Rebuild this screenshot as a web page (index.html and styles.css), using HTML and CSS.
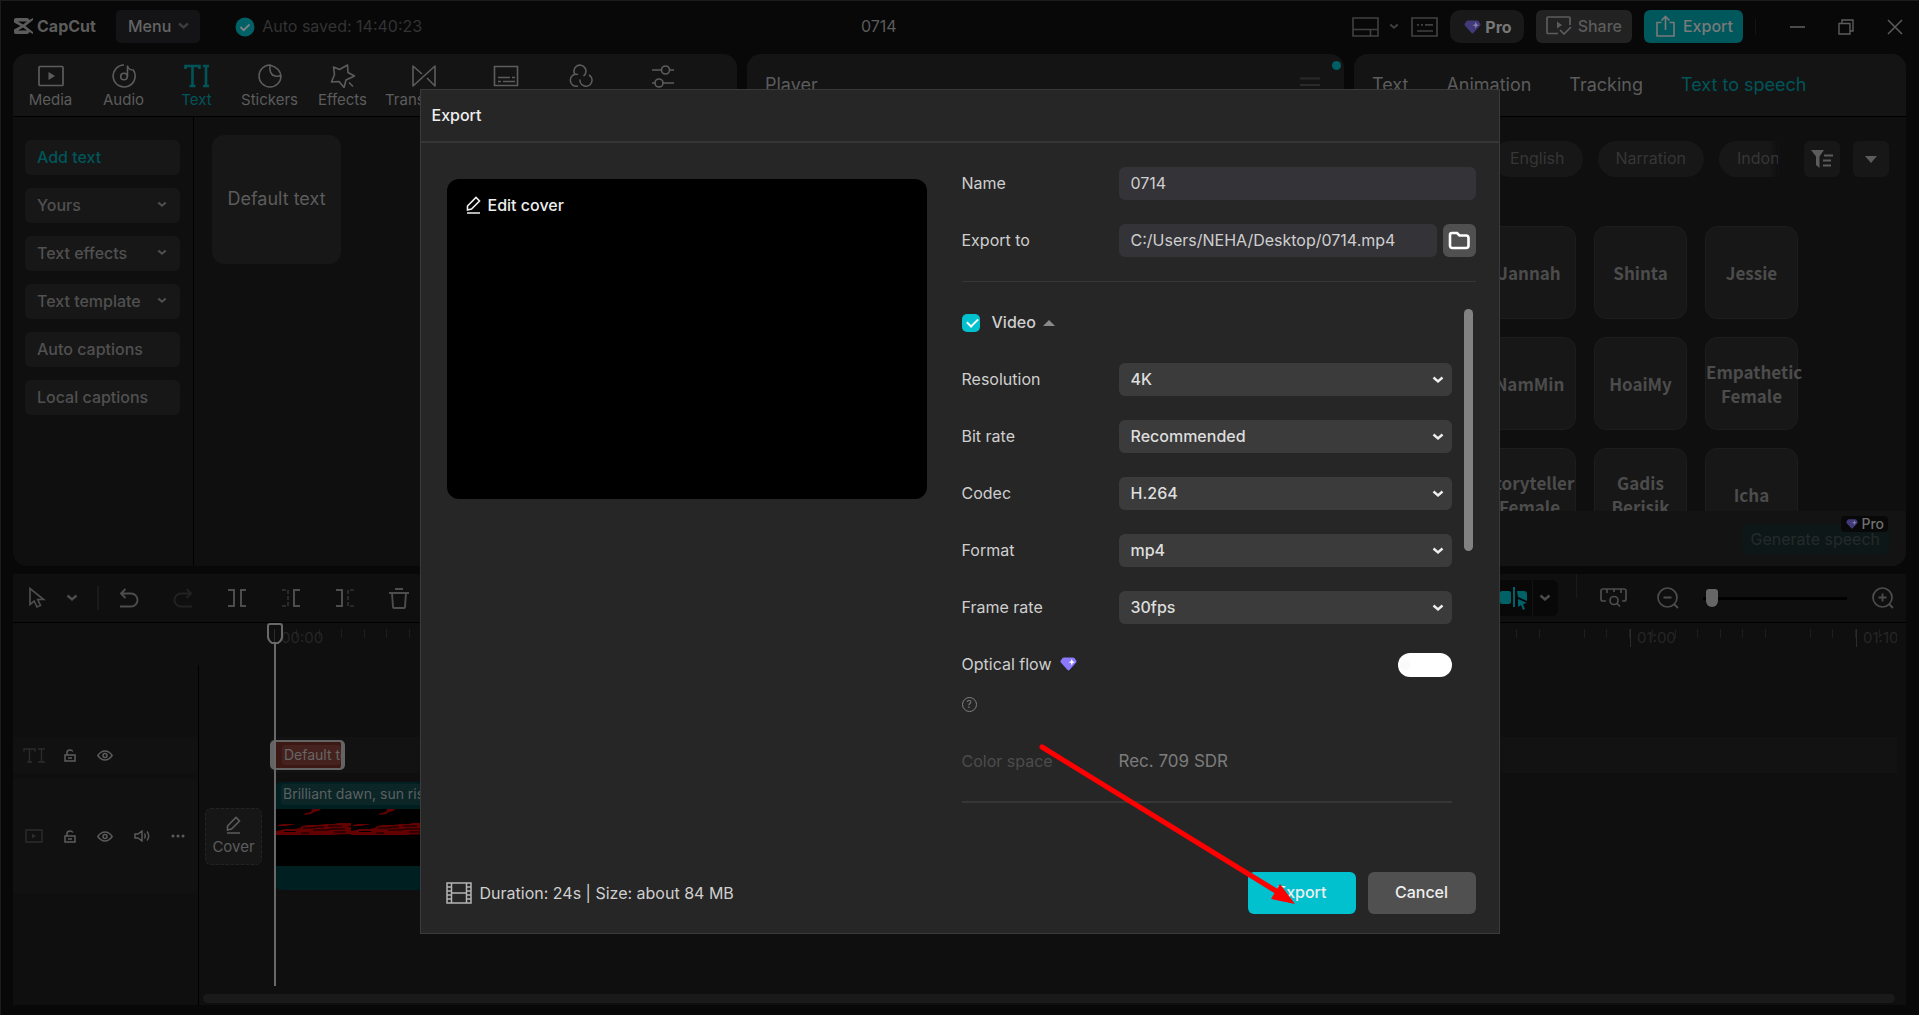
FILE: index.html
```html
<!DOCTYPE html>
<html lang="en">
<head>
    <meta charset="UTF-8">
    <meta name="viewport" content="width=device-width, initial-scale=1.0">
    <title>CapCut</title>
    <link rel="stylesheet" href="styles.css">
</head>
<body>
    <!-- shared icons -->
    <svg class="sprite" aria-hidden="true">
        <symbol id="chevron" viewBox="0 0 12 8"><path d="M1.5 1.5 6 5.5l4.5-4" fill="none" stroke="currentColor" stroke-width="2.4"/></symbol>
        <symbol id="gem" viewBox="0 0 18 15"><path d="M4 .5h10q1 0 1.600.8l1.800 2.700q.6 1-.2 1.900L10 14q-1 1-2 0L.8 5.900Q0 5 .6 4l1.800-2.700Q3 .5 4 .5z" fill="currentColor"/><path class="gem-star" d="M12.500 2l1 2.500 2.500 1-2.500 1-1 2.500-1-2.500-2.500-1 2.500-1z"/></symbol>
        <symbol id="pen" viewBox="0 0 16 18"><path d="M1.500 14v-4L10 1.500l3.500 3.500L5.500 13z M1 17h13" fill="none" stroke="currentColor" stroke-width="1.600"/></symbol>
        <symbol id="lock" viewBox="0 0 12 13"><path d="M1 6h10v6H1zM3 6V3.500q0-2.500 3-2.500 2 0 2.800 1.500M4 9h4" fill="none" stroke="currentColor" stroke-width="1.500"/></symbol>
        <symbol id="eye" viewBox="0 0 16 11"><path d="M.8 5.500Q4 1 8 1t7.200 4.500Q12 10 8 10T.8 5.500z" fill="none" stroke="currentColor" stroke-width="1.400"/><circle cx="8" cy="5.500" r="2" fill="none" stroke="currentColor" stroke-width="1.500"/></symbol>
    </svg>

    <header class="topbar">
        <div class="logo">
            <svg width="19" height="16" viewBox="0 0 19 16"><path d="M0 1.500Q0 0 2 0h11q2 0 2.200 2L19 0v2L11.500 8 19 14v2l-3.800-2q-.2 2-2.200 2H2q-2 0-2-1.500v-3L6.500 8 0 4.500zM4 3.500 9 6.500l4-3zM4 12.500h9l-4-3z" fill="currentColor" fill-rule="evenodd"/></svg>
            <span>CapCut</span>
        </div>
        <button class="menu-button">Menu <svg width="13" height="8"><use href="#chevron"/></svg></button>
        <div class="saved">
            <svg width="20" height="20" viewBox="0 0 20 20"><circle cx="10" cy="10" r="9.500" fill="#006167"/><path d="M5.500 10l3.200 3.200L14.500 7.500" fill="none" stroke="#808080" stroke-width="1.800"/></svg>
            <span>Auto saved: 14:40:23</span>
        </div>
        <div class="project-name">0714</div>
        <div class="top-actions">
            <button class="icon-button" aria-label="Layout">
                <svg width="27" height="20" viewBox="0 0 27 20"><path d="M1 1h25v18H1zM1 12.500h25M18.500 12.500V19" fill="none" stroke="currentColor" stroke-width="1.600"/></svg>
                <svg class="layout-chevron" width="10" height="7"><use href="#chevron"/></svg>
            </button>
            <button class="icon-button" aria-label="Shortcuts">
                <svg width="27" height="20" viewBox="0 0 27 20"><path d="M1 1h25v18H1zM6 7.800h2m2 0h2m2 0h8M6 14h16" fill="none" stroke="currentColor" stroke-width="1.700"/></svg>
            </button>
            <button class="pro-button"><svg class="gem" width="17" height="14"><use href="#gem"/></svg>Pro</button>
            <button class="share-button">
                <svg width="26" height="19" viewBox="0 0 26 19"><path d="M12 17.500H2q-1 0-1-1V2q0-1 1-1h21q1 0 1 1v7M14 14l4 4 7-7" fill="none" stroke="currentColor" stroke-width="1.700"/><path d="M11 5.500v7l5-3.500z" fill="currentColor"/></svg>
                Share
            </button>
            <button class="export-button">
                <svg width="19" height="22" viewBox="0 0 19 22"><path d="M5.500 7.500H1V21h17V7.500h-4.500M9.500 15V1.500M5.500 5.500l4-4 4 4" fill="none" stroke="currentColor" stroke-width="1.600"/></svg>
                Export
            </button>
            <div class="window-buttons">
                <button class="icon-button" aria-label="Minimize"><svg width="15" height="16" viewBox="0 0 15 16"><path d="M0 8h15" stroke="currentColor" stroke-width="1.600"/></svg></button>
                <button class="icon-button" aria-label="Restore"><svg width="16" height="16" viewBox="0 0 16 16"><path d="M1 4.500h11V15H1zM4 4.500V1h11v11h-3" fill="none" stroke="currentColor" stroke-width="1.400"/></svg></button>
                <button class="icon-button" aria-label="Close"><svg width="16" height="16" viewBox="0 0 16 16"><path d="M1 1l14 14M15 1 1 15" stroke="currentColor" stroke-width="1.500"/></svg></button>
            </div>
        </div>
    </header>

    <main class="panels">
        <section class="panel">
            <nav class="panel-header tabs">
                <button class="tab"><svg width="26" height="24" viewBox="0 0 26 24"><rect x="1" y="2.500" width="24" height="19" rx="1" fill="none" stroke="currentColor" stroke-width="1.700"/><path d="M10.500 8v8l6.500-4z" fill="currentColor"/></svg>Media</button>
                <button class="tab"><svg width="26" height="24" viewBox="0 0 26 24"><path d="M13 1a11 11 0 1 0 9 4.500M16.500 12.500V1.500q.5 4 5 4.500" fill="none" stroke="currentColor" stroke-width="1.600"/><circle cx="13" cy="12.500" r="3.300" fill="none" stroke="currentColor" stroke-width="1.600"/></svg>Audio</button>
                <button class="tab active"><svg width="26" height="24" viewBox="0 0 26 24"><path d="M1.500 5V2h14v3M8.500 2v20M5.500 22h6M19 2h6M19 22h6M22 2v20" fill="none" stroke="currentColor" stroke-width="2.600"/></svg>Text</button>
                <button class="tab"><svg width="26" height="24" viewBox="0 0 26 24"><path d="M13 1a11 11 0 1 0 11 11Q23 4 13 1zM13 1q-1 10 5 11 4 1 6-1" fill="none" stroke="currentColor" stroke-width="1.500"/></svg>Stickers</button>
                <button class="tab"><svg width="26" height="24" viewBox="0 0 26 24"><path d="M17.500 1 9.500 5.500 3.500 3l1 7.500L1.500 18l7.500-.5 5 6 2-7.500 8.500-4-6.500-3.500zM19 18.500l4 4" fill="none" stroke="currentColor" stroke-width="1.600" stroke-linejoin="round"/></svg>Effects</button>
                <button class="tab"><svg width="26" height="24" viewBox="0 0 26 24"><path d="M11 10 2 2v20L24 2v20l-8-8" fill="none" stroke="currentColor" stroke-width="1.600" stroke-linejoin="round"/></svg>Transitions</button>
                <button class="tab"><svg width="26" height="24" viewBox="0 0 26 24"><path d="M1.500 2.500h23v19h-23zM5 13.500h12m2 0h3M5 17.500h3m2 0h12" fill="none" stroke="currentColor" stroke-width="1.600"/></svg>Captions</button>
                <button class="tab"><svg width="26" height="24" viewBox="0 0 26 24"><path d="M8 10.500a6 6 0 1 1 8.500 1.500M11 10.500A6 6 0 1 0 11 22M13 15.500a6 6 0 1 0 9-4.500" fill="none" stroke="currentColor" stroke-width="1.600"/></svg>Filters</button>
                <button class="tab"><svg width="26" height="24" viewBox="0 0 26 24"><path d="M2 6h9m8 0h5M2 19h3m8 0h11" fill="none" stroke="currentColor" stroke-width="1.600"/><circle cx="15.500" cy="6" r="4" fill="none" stroke="currentColor" stroke-width="1.600"/><circle cx="9" cy="19" r="4" fill="none" stroke="currentColor" stroke-width="1.600"/></svg>Adjustment</button>
            </nav>
            <div class="library">
                <div class="side-menu">
                    <button class="side-item active">Add text</button>
                    <button class="side-item">Yours <svg width="10" height="7"><use href="#chevron"/></svg></button>
                    <button class="side-item">Text effects <svg width="10" height="7"><use href="#chevron"/></svg></button>
                    <button class="side-item">Text template <svg width="10" height="7"><use href="#chevron"/></svg></button>
                    <button class="side-item">Auto captions</button>
                    <button class="side-item">Local captions</button>
                </div>
                <div class="library-items">
                    <button class="text-card">Default text</button>
                </div>
            </div>
        </section>

        <section class="panel">
            <div class="panel-header player-header">
                <span>Player</span>
                <svg width="20" height="16" viewBox="0 0 20 16"><path d="M0 1.500h20M0 8h20M0 14.500h20" stroke="#2a2a2a" stroke-width="2"/></svg>
                <i class="dot"></i>
            </div>
        </section>

        <section class="panel">
            <nav class="panel-header speech-tabs">
                <button>Text</button>
                <button>Animation</button>
                <button>Tracking</button>
                <button class="active">Text to speech</button>
            </nav>
            <div class="filters">
                <div class="chips">
                    <button class="chip">English</button>
                    <button class="chip">Narration</button>
                    <button class="chip cut">Indonesian</button>
                </div>
                <button class="square-button" aria-label="Filter"><svg width="22" height="18" viewBox="0 0 22 18"><path d="M0 0h13L8.500 6.500V18L5 15V6.500z" fill="currentColor"/><path d="M13 5.500h9M12 10.500h8M12 15.500h8" stroke="currentColor" stroke-width="2"/></svg></button>
                <button class="square-button" aria-label="More"><svg width="12" height="7" viewBox="0 0 12 7"><path d="M0 0h12L6 7z" fill="currentColor"/></svg></button>
            </div>
            <div class="voices">
                <button class="voice first">Jannah</button>
                <button class="voice">Shinta</button>
                <button class="voice">Jessie</button>
                <button class="voice first">NamMin</button>
                <button class="voice">HoaiMy</button>
                <button class="voice">Empathetic Female</button>
                <button class="voice first">Storyteller Female</button>
                <button class="voice">Gadis Berisik</button>
                <button class="voice">Icha</button>
            </div>
            <div class="speech-footer">
                <button class="generate" disabled>Generate speech</button>
                <span class="pro-badge"><svg class="gem" width="12" height="10"><use href="#gem"/></svg>Pro</span>
            </div>
        </section>
    </main>

    <section class="timeline">
        <div class="toolbar">
            <div class="tools">
                <button class="tool" aria-label="Select"><svg width="18" height="22" viewBox="0 0 18 22"><path d="M2 1.500v16l4.200-3.500 2.800 6 3.500-1.600-2.800-5.900h6z" fill="none" stroke="currentColor" stroke-width="1.700"/></svg></button>
                <button class="tool narrow" aria-label="Select mode"><svg width="12" height="8"><use href="#chevron"/></svg></button>
                <i class="tool-separator"></i>
                <button class="tool" aria-label="Undo"><svg width="20" height="20" viewBox="0 0 20 20"><path d="M6.500 1 2 5.500 6.500 10M2 5.500h10a6.300 6.300 0 0 1 0 13H1" fill="none" stroke="currentColor" stroke-width="1.900"/></svg></button>
                <button class="tool off" aria-label="Redo"><svg width="20" height="20" viewBox="0 0 20 20"><path d="M13.500 1 18 5.500 13.500 10M18 5.500H8a6.300 6.300 0 0 0 0 13h11" fill="none" stroke="currentColor" stroke-width="1.900"/></svg></button>
                <button class="tool" aria-label="Split"><svg width="18" height="18" viewBox="0 0 18 18"><path d="M0 1h6v16H0M18 1h-5v16h5" fill="none" stroke="currentColor" stroke-width="2"/></svg></button>
                <button class="tool" aria-label="Delete left"><svg width="18" height="18" viewBox="0 0 18 18"><path d="M0 1h6v16H0" fill="none" stroke="#2a2a2a" stroke-width="2" stroke-dasharray="4 2"/><path d="M18 1h-6v16h6" fill="none" stroke="currentColor" stroke-width="2"/></svg></button>
                <button class="tool" aria-label="Delete right"><svg width="18" height="18" viewBox="0 0 18 18"><path d="M0 1h6v16H0" fill="none" stroke="currentColor" stroke-width="2"/><path d="M18 1h-6v16h6" fill="none" stroke="#2a2a2a" stroke-width="2" stroke-dasharray="4 2"/></svg></button>
                <button class="tool" aria-label="Delete"><svg width="20" height="21" viewBox="0 0 20 21"><path d="M6 1h8M0 5h20M3 5l1 14q0 1 1 1h10q1 0 1-1l1-14" fill="none" stroke="currentColor" stroke-width="1.900"/></svg></button>
            </div>
            <div class="tools-right">
                <button class="snap" aria-label="Preview axis">
                    <svg width="28" height="24" viewBox="0 0 28 24"><rect x="0" y="5" width="11" height="13" rx="2" fill="#006167"/><path d="M14 1v20" stroke="#006167" stroke-width="2"/><path d="M17 5h7q3 0 3 3v7l-9-4zM18 13l9 4-4 1 2 5-2 1-2-5-3 2z" fill="#006167"/></svg>
                    <svg class="snap-chevron" width="12" height="8"><use href="#chevron"/></svg>
                </button>
                <i class="right-separator"></i>
                <button class="icon-button fit" aria-label="Fit timeline"><svg width="27" height="20" viewBox="0 0 27 20"><path d="M6 13H3q-2 0-2-2V3q0-2 2-2h21q2 0 2 2v8q0 2-2 2h-2M7 1v4m7-4v3m7-3v4" fill="none" stroke="currentColor" stroke-width="1.700"/><circle cx="14" cy="12.500" r="4" fill="none" stroke="currentColor" stroke-width="1.700"/><path d="M16.500 15l3.500 3.500" stroke="currentColor" stroke-width="1.700"/></svg></button>
                <button class="icon-button" aria-label="Zoom out"><svg width="22" height="22" viewBox="0 0 22 22"><circle cx="10.500" cy="10.500" r="9.500" fill="none" stroke="currentColor" stroke-width="1.700"/><path d="M6.500 10.500h8M17 17l4 4" stroke="currentColor" stroke-width="1.800"/></svg></button>
                <input class="zoom-slider" type="range" min="0" max="100" value="2" aria-label="Timeline zoom">
                <button class="icon-button" aria-label="Zoom in"><svg width="22" height="22" viewBox="0 0 22 22"><circle cx="10.500" cy="10.500" r="9.500" fill="none" stroke="currentColor" stroke-width="1.700"/><path d="M6.500 10.500h8M10.500 6.500v8M17 17l4 4" stroke="currentColor" stroke-width="1.800"/></svg></button>
            </div>
        </div>
        <div class="ruler">
            <span class="mark">00:00</span>
            <span class="mark"></span>
            <span class="mark"></span>
            <span class="mark"></span>
            <span class="mark"></span>
            <span class="mark"></span>
            <span class="mark">01:00</span>
            <span class="mark">01:10</span>
        </div>
        <div class="tracks">
            <div class="track-heads">
                <div class="track-head text-track">
                    <svg class="dim" width="22" height="15" viewBox="0 0 22 15"><path d="M1 3.500V1h11v2.500M6.500 1v13M4 14h5M15 1h7M15 14h7M18.500 1v13" fill="none" stroke="currentColor" stroke-width="1.400"/></svg>
                    <svg width="12" height="13"><use href="#lock"/></svg>
                    <svg width="16" height="11"><use href="#eye"/></svg>
                </div>
                <div class="track-head video-track">
                    <svg class="dim" width="18" height="14" viewBox="0 0 18 14"><path d="M1 1h16v12H1z" fill="none" stroke="currentColor" stroke-width="1.400"/><path d="M7 4.500v5l4-2.500z" fill="currentColor"/></svg>
                    <svg width="12" height="13"><use href="#lock"/></svg>
                    <svg width="16" height="11"><use href="#eye"/></svg>
                    <svg width="16" height="12" viewBox="0 0 16 12"><path d="M1 4h3l4-3v10L4 8H1zM10.500 3.500q1.500 2.500 0 5M13 1.500q3.500 4.500 0 9" fill="none" stroke="currentColor" stroke-width="1.400"/></svg>
                    <svg width="14" height="4" viewBox="0 0 14 4"><path d="M2 2h0M7 2h0M12 2h0" stroke="currentColor" stroke-width="3" stroke-linecap="round"/></svg>
                </div>
            </div>
            <div class="track-lanes">
                <div class="lane text-track">
                    <div class="text-clip"><span>Default text</span></div>
                </div>
                <div class="lane video-track">
                    <button class="cover-button"><svg width="16" height="18"><use href="#pen"/></svg>Cover</button>
                    <div class="video-clip">
                        <div class="clip-name"><span>Brilliant dawn, sun rising</span></div>
                        <svg class="frames" width="100%" height="57">
                            <defs>
                                <pattern id="frame" width="75" height="57" patternUnits="userSpaceOnUse">
                                    <rect width="75" height="57" fill="#000"/>
                                    <path d="M36 0h9l-3 2-4 1-3 2-8 1 3-2 5-1zM2 16l5-1h9l3 1h-5l-4 1H2zM0 26v-4l6-1 2-1h10l6-1 2-2 6-1h10l8-1h8l4-1h13v3l-5 1h5v7l-22 1H0z" fill="#650000"/>
                                    <path d="M27 19h9l5-1h7M37 21h14l4-1h14M8 22.500h12M52 17h14M58 23h12M25 24h8" fill="none" stroke="#000" stroke-width="1"/>
                                </pattern>
                            </defs>
                            <rect width="100%" height="57" fill="url(#frame)"/>
                        </svg>
                    </div>
                </div>
                <div class="scrollbar"></div>
            </div>
        </div>
        <div class="playhead"><svg width="16" height="22" viewBox="0 0 16 22"><path d="M3 1h10q2 0 2 2v11q0 3-4 6H5q-4-3-4-6V3q0-2 2-2z" fill="none" stroke="currentColor" stroke-width="2"/></svg></div>
    </section>

    <div class="overlay">
        <form class="modal" role="dialog" aria-labelledby="modal-title" onsubmit="return false">
            <h1 class="modal-title" id="modal-title">Export</h1>
            <div class="modal-body">
                <div class="cover">
                    <button type="button" class="edit-cover"><svg width="16" height="18"><use href="#pen"/></svg>Edit cover</button>
                </div>
                <div class="settings">
                    <div class="row">
                        <label for="name">Name</label>
                        <input class="field" type="text" id="name" value="0714">
                    </div>
                    <div class="row">
                        <label for="path">Export to</label>
                        <div class="path">
                            <input class="field" type="text" id="path" value="C:/Users/NEHA/Desktop/0714.mp4">
                            <button type="button" class="folder" aria-label="Choose folder"><svg width="23" height="19" viewBox="0 0 23 19"><path d="M4 2h5l2.500 2.500H18q2.500 0 2.500 2.500v7.500q0 2.500-2.500 2.500H4.500Q2 17 2 14.500V4q0-2 2-2z" fill="none" stroke="#fff" stroke-width="2.600"/></svg></button>
                        </div>
                    </div>
                    <div class="scroll-area">
                        <div class="video-settings">
                            <div class="video-toggle">
                                <input type="checkbox" id="video" checked>
                                <label for="video">Video</label>
                                <svg width="12" height="6" viewBox="0 0 12 6"><path d="M0 6h12L6 0z" fill="#8a8a8a"/></svg>
                            </div>
                            <div class="row">
                                <label for="resolution">Resolution</label>
                                <div class="select"><select id="resolution"><option>4K</option></select><svg width="12" height="8"><use href="#chevron"/></svg></div>
                            </div>
                            <div class="row">
                                <label for="bitrate">Bit rate</label>
                                <div class="select"><select id="bitrate"><option>Recommended</option></select><svg width="12" height="8"><use href="#chevron"/></svg></div>
                            </div>
                            <div class="row">
                                <label for="codec">Codec</label>
                                <div class="select"><select id="codec"><option>H.264</option></select><svg width="12" height="8"><use href="#chevron"/></svg></div>
                            </div>
                            <div class="row">
                                <label for="format">Format</label>
                                <div class="select"><select id="format"><option>mp4</option></select><svg width="12" height="8"><use href="#chevron"/></svg></div>
                            </div>
                            <div class="row">
                                <label for="framerate">Frame rate</label>
                                <div class="select"><select id="framerate"><option>30fps</option></select><svg width="12" height="8"><use href="#chevron"/></svg></div>
                            </div>
                            <div class="row optical">
                                <label for="optical">Optical flow <svg class="gem bright" width="17" height="14"><use href="#gem"/></svg></label>
                                <input class="switch" type="checkbox" id="optical">
                            </div>
                            <button type="button" class="help" aria-label="Help">?</button>
                            <div class="row color-space">
                                <span class="muted">Color space</span>
                                <span class="value">Rec. 709 SDR</span>
                            </div>
                        </div>
                        <div class="thumb"></div>
                    </div>
                </div>
            </div>
            <div class="modal-footer">
                <svg width="26" height="22" viewBox="0 0 26 22"><path d="M1 1h24v20H1zM5.500 1v20M20.500 1v20M5.500 11h15M1 5h4.500M1 9h4.500M1 13h4.500M1 17h4.500M20.500 5H25M20.500 9H25M20.500 13H25M20.500 17H25" fill="none" stroke="#b4b4b4" stroke-width="1.500"/></svg>
                <p>Duration: 24s | Size: about 84 MB</p>
                <button type="submit" class="primary">Export</button>
                <button type="button">Cancel</button>
            </div>
            <svg class="arrow" width="264" height="170" viewBox="0 0 264 170"><path d="M6 6 240 150" stroke="#f00" stroke-width="5" stroke-linecap="round"/><path d="M259 163l-24-5 9-15z" fill="#f00"/></svg>
        </form>
    </div>
</body>
</html>
```
FILE: styles.css
```css
* {
    box-sizing: border-box;
}
body {
    margin: 0;
    height: 100vh;
    display: flex;
    flex-direction: column;
    background: #080808;
    color: #5c5c5c;
    font-family: Inter, "Noto Sans", sans-serif;
    font-size: 16px;
    line-height: 20px;
    border-top: 1px solid #1c1c1c;
    border-left: 1px solid #1c1c1c;
    overflow: hidden;
}
button, input, select {
    font: inherit;
    color: inherit;
    border: none;
    background: none;
    padding: 0;
    margin: 0;
}
button {
    cursor: pointer;
}
svg {
    display: block;
    flex: none;
}
.sprite {
    position: absolute;
    width: 0;
    height: 0;
}
.gem {
    --star: #8682a8;
    color: #413a78;
}
.gem-star {
    fill: var(--star);
}
.gem.bright {
    --star: #fff;
    color: #8a78ff;
}

/* top bar */
.topbar {
    display: flex;
    flex: none;
    align-items: center;
    height: 53px;
    padding: 0 16px 2px 13px;
}
.logo {
    display: flex;
    align-items: center;
    gap: 4px;
    padding-bottom: 2px;
    font-weight: 700;
}
.logo span {
    width: 79px;
}
.menu-button {
    display: flex;
    align-items: center;
    gap: 6px;
    height: 33px;
    padding: 0 10px 2px 12px;
    border-radius: 5px;
    background: #141416;
    color: #656565;
    font-weight: 500;
}
.menu-button svg {
    color: #3c3c3c;
}
.saved {
    display: flex;
    align-items: center;
    gap: 7px;
    margin-left: 35px;
    color: #333;
}
.saved span {
    padding-bottom: 2px;
}
.project-name {
    flex: 1;
    padding: 0 17px 2px 0;
    text-align: center;
}
.top-actions {
    display: flex;
    align-items: center;
    gap: 12px;
    font-weight: 500;
}
.icon-button {
    display: flex;
    align-items: center;
}
.top-actions > .icon-button {
    color: #404040;
}
.layout-chevron {
    margin-left: 10px;
}
.pro-button, .share-button, .export-button {
    display: flex;
    align-items: center;
    gap: 6px;
    height: 33px;
    padding: 0 10px 2px;
    border-radius: 6px;
    background: #222;
}
.pro-button {
    gap: 4px;
    padding: 0 12px 0 14px;
    border-radius: 10px;
    background: #191919;
    color: #777;
    font-weight: 700;
}
.export-button {
    gap: 8px;
    padding: 0 10px 2px 12px;
    background: #00575c;
    color: #7a7a7a;
}
.window-buttons {
    display: flex;
    gap: 33px;
    padding-left: 34px;
    border-left: 1px solid #141414;
}

/* panels */
.panels {
    flex: 1;
    min-height: 0;
    display: grid;
    grid-template-columns: 724fr 597fr 552fr;
    grid-template-rows: minmax(0, 1fr);
    gap: 10px;
    padding: 0 13px 0 12px;
}
.panel {
    display: flex;
    flex-direction: column;
    min-width: 0;
    min-height: 0;
    border-radius: 14px;
    background: #0f0f0f;
    overflow: hidden;
}
.panel-header {
    display: flex;
    flex: none;
    height: 63px;
    border-bottom: 1px solid #000;
    background: #141414;
}
.tabs {
    padding-left: 1px;
}
.tab {
    display: flex;
    flex-direction: column;
    align-items: center;
    gap: 2px;
    min-width: 73px;
    padding: 10px 6px 0;
    font-size: 15px;
}
.tab.active, .side-item.active, .speech-tabs .active {
    color: #00555a;
}
.library {
    flex: 1;
    display: flex;
}
.side-menu {
    display: flex;
    flex-direction: column;
    gap: 13px;
    width: 181px;
    padding: 23px 13px 0 12px;
    border-right: 1px solid #000;
}
.side-item {
    display: flex;
    align-items: center;
    justify-content: space-between;
    height: 35px;
    padding: 0 13px 2px 12px;
    border-radius: 6px;
    background: #171717;
    color: #505050;
    font-weight: 500;
}
.library-items {
    padding: 18px;
}
.text-card {
    width: 129px;
    height: 129px;
    padding-bottom: 2px;
    border-radius: 12px;
    background: #171717;
    font-size: 18px;
}
.player-header {
    position: relative;
    justify-content: space-between;
    align-items: center;
    padding: 0 24px 0 18px;
    font-size: 18px;
}
.dot {
    position: absolute;
    top: 7px;
    right: 3px;
    width: 9px;
    height: 9px;
    border-radius: 50%;
    background: #005f65;
}
.speech-tabs {
    gap: 38px;
    padding: 0 18px;
    font-size: 18px;
}
.filters {
    display: flex;
    justify-content: flex-end;
    gap: 13px;
    padding: 24px 17px 0;
}
.chips {
    display: flex;
    gap: 15px;
    margin-right: 12px;
    border-right: 1px solid #111118;
}
.chip {
    height: 36px;
    padding: 0 18px 2px;
    border-radius: 18px;
    background: #171717;
    color: #363636;
}
.chip.cut {
    width: 59px;
    padding-right: 0;
    border-radius: 18px 0 0 18px;
    background: linear-gradient(90deg, #171717 50px, #0f0f0f);
    overflow: hidden;
    text-align: left;
}
.square-button {
    display: grid;
    place-items: center;
    width: 36px;
    height: 36px;
    border-radius: 6px;
    background: #171717;
}
.voices {
    flex: 1;
    display: grid;
    grid-template-columns: repeat(4, 93px);
    grid-auto-rows: 93px;
    gap: 18px;
    min-height: 0;
    padding: 49px 0 0 18px;
    overflow: hidden;
}
.voice {
    border: 1px solid #1d1d1d;
    border-radius: 12px;
    background: #171717;
    color: #4c4c4c;
    font-family: "Noto Sans CJK SC", sans-serif;
    font-size: 17px;
    font-weight: 700;
    line-height: 24px;
}
.voice.first {
    grid-column-start: 2;
}
.speech-footer {
    position: relative;
    flex: none;
    display: flex;
    justify-content: flex-end;
    height: 55px;
    padding: 13px 17px 0;
    background: #131313;
}
.generate {
    height: 30px;
    padding: 0 9px;
    border-radius: 5px;
    background: #0d1718;
    color: #252b2b;
}
.pro-badge {
    position: absolute;
    top: 5px;
    right: 18px;
    display: flex;
    align-items: center;
    gap: 3px;
    height: 16px;
    padding: 0 4px 0 5px;
    border-radius: 4px;
    background: #080808;
    color: #707070;
    font-size: 14px;
    font-weight: 500;
}

/* timeline */
.timeline {
    position: relative;
    flex: none;
    margin: 8px 13px 10px 12px;
    background: #0f0f0f;
}
.toolbar {
    display: flex;
    justify-content: space-between;
    height: 49px;
    border-bottom: 1px solid #000;
    color: #4d4d4d;
}
.tools, .tools-right {
    display: flex;
    align-items: center;
}
.tool {
    display: grid;
    place-items: center;
    width: 54px;
}
.tool:first-child {
    width: 48px;
}
.tool.narrow {
    width: 22px;
}
.tool.off {
    color: #222;
}
.tool-separator {
    width: 2px;
    height: 24px;
    margin: 0 3px 0 14px;
    background: #1a1a1a;
}
.tools-right {
    padding-right: 12px;
}
.snap {
    display: flex;
    align-items: center;
    height: 36px;
    padding: 0 4px;
    border-radius: 6px;
    background: #080808;
}
.snap-chevron {
    box-sizing: content-box;
    margin-left: 4px;
    padding: 14px 3px 14px 6px;
    border-left: 1px solid #131313;
}
.right-separator {
    align-self: flex-start;
    width: 1px;
    height: 24px;
    margin: 0 23px 0 18px;
    background: #1a1a1a;
}
.fit {
    margin-right: 30px;
}
.zoom-slider {
    appearance: none;
    width: 144px;
    height: 18px;
    margin: 0 25px 0 24px;
    background: linear-gradient(#000, #000) center / 100% 3px no-repeat;
}
.zoom-slider::-webkit-slider-thumb {
    appearance: none;
    width: 12px;
    height: 18px;
    border-radius: 3px 3px 6px 6px;
    background: #666;
}
.ruler {
    display: flex;
    height: 42px;
    margin: 0 9px 0 261px;
    padding-top: 6px;
    overflow: hidden;
}
.mark {
    flex: 0 0 226px;
    height: 18px;
    padding-left: 6px;
    border-left: 1px solid #2c2c2c;
    background: repeating-linear-gradient(90deg, transparent 0 calc(10% - 1px), #1e1e1e calc(10% - 1px) 10%) 0 0 / 100% 9px no-repeat;
    color: #262626;
    font-size: 15px;
    line-height: 18px;
}
.tracks {
    display: flex;
    height: 340px;
}
.track-heads {
    width: 186px;
    padding-top: 72px;
    border-right: 1px solid #000;
}
.track-head {
    display: flex;
    align-items: center;
    gap: 21px;
    padding-left: 10px;
    background: #111;
}
.track-head .dim {
    width: 22px;
    margin-right: -2px;
    color: #2c2c2c;
}
.text-track {
    height: 36px;
    margin-bottom: 6px;
}
.video-track {
    height: 114px;
}
.track-lanes {
    flex: 1;
    display: flex;
    flex-direction: column;
    min-width: 0;
    padding-top: 72px;
}
.lane {
    display: flex;
    margin-right: 9px;
}
.lane.text-track {
    margin-left: 71px;
    padding: 3px 0;
    background: #121212;
}
.text-clip {
    width: 75px;
    padding: 3px 0 3px 10px;
    border: 2px solid #646464;
    border-left-width: 6px;
    border-right-width: 4px;
    border-radius: 5px;
    background: #3b1813;
    color: #666;
    overflow: hidden;
    font-size: 14px;
    line-height: 20px;
}
.text-clip span, .clip-name span {
    display: block;
    margin-left: -4px;
    padding-left: 2px;
    border-radius: 3px;
    white-space: nowrap;
}
.text-clip span {
    background: #45221d;
}
.cover-button {
    display: flex;
    flex-direction: column;
    align-items: center;
    justify-content: center;
    gap: 3px;
    width: 57px;
    height: 57px;
    margin: 29px 14px 0 6px;
    border: 1px dashed #242424;
    border-radius: 6px;
    background: #161616;
    font-size: 15px;
}
.video-clip {
    flex: 0 0 543px;
    height: 108px;
    margin-top: 3px;
    border-radius: 5px;
    background: #001f21;
    overflow: hidden;
}
.clip-name {
    height: 27px;
    padding: 2px 9px;
    color: #5a6161;
}
.clip-name span {
    height: 21px;
    font-size: 14px;
    background: #0c2527;
}
.scrollbar {
    height: 9px;
    margin: auto 11px 2px 4px;
    border-radius: 5px;
    background: #1a1a1a;
}
.playhead {
    position: absolute;
    top: 49px;
    bottom: 19px;
    left: 254px;
    color: #696969;
}
.playhead::after {
    content: "";
    position: absolute;
    top: 21px;
    bottom: 0;
    left: 7px;
    width: 2px;
    background: #696969;
}

/* export dialog */
.overlay {
    position: fixed;
    inset: 0;
    display: flex;
    align-items: center;
    justify-content: center;
    padding-top: 7px;
}
.modal {
    position: relative;
    width: 1080px;
    max-width: 90%;
    border: 1px solid #3a3a3a;
    background: #262626;
    color: #cfcfcf;
}
.modal-title {
    margin: 0;
    padding: 15px 11px 16px;
    border-bottom: 2px solid #363636;
    color: #eee;
    font-size: 16px;
    font-weight: 500;
    line-height: 20px;
}
.modal-body {
    display: grid;
    grid-template-columns: 480fr 514fr;
    align-items: start;
    gap: 35px;
    padding: 24px 23px 45px 26px;
}
.cover {
    aspect-ratio: 3 / 2;
    margin-top: 12px;
    padding: 16px 19px;
    border-radius: 12px;
    background: #000;
}
.edit-cover {
    display: flex;
    align-items: center;
    gap: 6px;
    color: #eee;
    font-weight: 500;
}
.row {
    display: grid;
    grid-template-columns: 157px 1fr;
    align-items: center;
    height: 34px;
    margin-bottom: 23px;
}
.row label {
    padding-bottom: 2px;
}
.field {
    width: 100%;
    min-width: 0;
    height: 33px;
    padding: 0 12px 2px;
    border-radius: 6px;
    background: #343338;
}
.path {
    display: flex;
    gap: 6px;
}
.folder {
    display: grid;
    flex: none;
    place-items: center;
    width: 33px;
    height: 33px;
    border-radius: 6px;
    background: #505050;
}
.scroll-area {
    display: flex;
    gap: 12px;
    padding: 27px 3px 0 0;
    border-top: 1px solid #363636;
}
.video-settings {
    flex: 1;
    border-bottom: 2px solid #363636;
}
.thumb {
    width: 9px;
    height: 242px;
    border-radius: 5px;
    background: #828282;
}
.video-toggle {
    display: flex;
    align-items: center;
    height: 28px;
    margin-bottom: 26px;
    font-weight: 500;
}
.video-toggle label {
    padding-bottom: 2px;
}
.video-toggle input {
    appearance: none;
    position: relative;
    width: 18px;
    height: 18px;
    margin-right: 12px;
    border-radius: 5px;
    background: #00c1cd;
}
.video-toggle input:checked::after {
    content: "";
    position: absolute;
    top: 4px;
    left: 5px;
    width: 9px;
    height: 5px;
    border: solid #fff;
    border-width: 0 0 2px 2px;
    transform: rotate(-45deg);
}
.video-toggle svg {
    margin-left: 7px;
}
.select {
    position: relative;
}
.select select {
    appearance: none;
    display: block;
    width: 100%;
    height: 33px;
    padding: 0 12px 2px;
    border-radius: 6px;
    background: #3b3b3b;
    color: #dedede;
    font-weight: 500;
}
.select svg {
    position: absolute;
    top: 13px;
    right: 8px;
    color: #eee;
    pointer-events: none;
}
.optical {
    margin-bottom: 15px;
}
.optical label {
    display: flex;
    align-items: center;
    gap: 8px;
}
.switch {
    appearance: none;
    justify-self: end;
    width: 54px;
    height: 24px;
    border-radius: 12px;
    background: radial-gradient(circle at 7px 12px, #fafafa 5px, #fff 6px);
}
.help {
    display: block;
    width: 15px;
    height: 15px;
    margin-bottom: 32px;
    border: 1px solid #808080;
    border-radius: 50%;
    color: #808080;
    font-size: 10px;
    line-height: 13px;
}
.muted {
    color: #4c4c4c;
}
.value {
    color: #7c7c7c;
    font-size: 17px;
}
.modal-footer {
    display: flex;
    align-items: center;
    padding: 24px 23px 19px 25px;
}
.modal-footer p {
    flex: 1;
    margin: 0 0 0 8px;
}
.modal-footer button {
    width: 108px;
    height: 42px;
    margin-left: 12px;
    padding-bottom: 2px;
    border-radius: 6px;
    background: #505050;
    color: #eee;
    font-weight: 500;
}
.modal-footer .primary {
    background: #00c1cd;
}
.arrow {
    position: absolute;
    right: 199px;
    bottom: 22px;
    pointer-events: none;
}
```
